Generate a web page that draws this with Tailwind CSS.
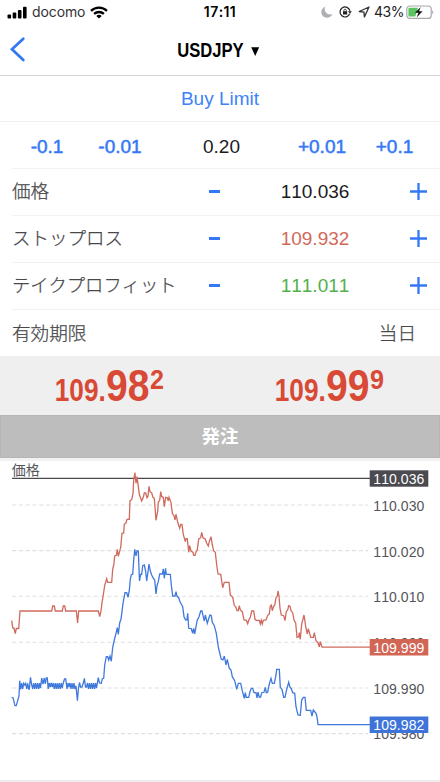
<!DOCTYPE html>
<html lang="ja">
  <head>
    <meta charset="UTF-8" />
    <meta name="viewport" content="width=device-width, initial-scale=1.0" />
    <title>USDJPY</title>
    <script src="https://cdn.jsdelivr.net/npm/@tailwindcss/browser@4"></script>
  </head>

  <body
    class="w-[440px] h-[782px] overflow-hidden bg-white text-[19px] leading-none text-[#1c1c1e] font-['Liberation_Sans','Noto_Sans_CJK_JP',sans-serif] [font-kerning:none]"
  >
    <!-- Status bar -->
    <header class="grid grid-cols-3 items-center h-6 font-[Inter,sans-serif] text-[14px]">
      <div class="flex items-center pl-[7px]">
        <svg class="w-5 h-[13px]" viewBox="0 0 20 13" fill="#000">
          <rect x="0.5" y="8.6" width="3.6" height="4" rx="1" />
          <rect x="5.7" y="6.6" width="3.6" height="6" rx="1" />
          <rect x="10.9" y="3.9" width="3.6" height="8.7" rx="1" />
          <rect x="16" y="0.8" width="3.6" height="11.8" rx="1" />
        </svg>
        <span class="ml-[5px] w-[53px] tracking-[-0.1px] text-[#333]">docomo</span>
        <svg class="ml-[5px] w-[18px] h-[13px]" viewBox="0 0 18 13" fill="none" stroke="#000" stroke-width="2.3">
          <path d="M1 4.8a11.5 11.5 0 0 1 16 0" />
          <path d="M4.1 7.9a7.2 7.2 0 0 1 9.8 0" />
          <path d="M9 12.6 6.3 10a4 4 0 0 1 5.4 0z" fill="#000" stroke="none" />
        </svg>
      </div>
      <div class="text-center font-semibold tracking-[0.4px] text-black">17:11</div>
      <div class="flex items-center justify-end pr-[6px]">
        <svg class="w-3 h-3" viewBox="0 0 12 12" fill="#b0b0b4">
          <path d="M4.4.5C1.9 1.4.3 3.5.3 6.1c0 3.1 2.5 5.6 5.6 5.6 2.5 0 4.6-1.4 5.5-3.7-.8.3-1.5.4-2.2.4C6.100 8.400 3.700 6.200 3.700 3.100c0-.9.2-1.800.7-2.600z" />
        </svg>
        <svg class="ml-[6px] w-[13px] h-3" viewBox="0 0 13 12" fill="none" stroke="#222" stroke-width="1.2">
          <path d="M10.7 7.8A5 5 0 1 1 10.9 4.8" />
          <path d="M9 5.2h3.9L11 7.8z" fill="#222" stroke="none" />
          <rect x="4" y="5.2" width="4.2" height="3.3" fill="#222" stroke="none" />
          <path d="M4.9 5.4V4.4a1.2 1.2 0 0 1 2.4 0v1" stroke-width="0.8" />
        </svg>
        <svg class="ml-[6px] w-3 h-3" viewBox="0 0 12 12" fill="none" stroke="#333" stroke-width="1.3" stroke-linejoin="round">
          <path d="M11 1 1.3 5.5 6 6.1 6.4 10.9z" />
        </svg>
        <span class="ml-[4px] mr-px w-[29px] tracking-[-0.5px] text-[#222]">43%</span>
        <svg class="ml-[2px] w-7 h-[14px]" viewBox="0 0 28 14">
          <rect x="0.8" y="1" width="24.4" height="12.4" rx="3" fill="none" stroke="#a9a9ad" stroke-width="1.2" />
          <path d="M3.6 2.8H12L9.3 11.6H3.6A1.2 1.2 0 0 1 2.4 10.4V4A1.2 1.2 0 0 1 3.6 2.8z" fill="#5ac560" />
          <path d="M14.8 2 8.9 7.8h3.5L10.7 12.5 16.5 6.3H13z" fill="#111" />
          <path d="M26.2 5.3a2.4 2.4 0 0 1 0 4z" fill="#a9a9ad" />
        </svg>
      </div>
    </header>

    <!-- Title bar -->
    <nav class="h-[52px] border-b border-[#d4d4d6]">
      <svg class="w-[440px] h-[51px]" viewBox="0 24 440 51">
        <path d="M23.3 38.7 12 49.3 23.3 60" fill="none" stroke="#3478f6" stroke-width="2.8" stroke-linecap="round" stroke-linejoin="miter" />
        <text x="177.2" y="57.2" font-size="20.8" font-weight="700" textLength="66.5" lengthAdjust="spacingAndGlyphs" fill="#000">USDJPY</text>
        <path d="M251.2 47.3h8L255.2 56z" fill="#000" />
      </svg>
    </nav>

    <!-- Order form -->
    <main>
      <div class="h-[46px] flex items-center justify-center border-b border-[#f2f2f2] text-[#3f82f7]">
        <span class="w-[80px] text-center whitespace-nowrap">Buy Limit</span>
      </div>
      <div class="h-[46px] ml-3 flex items-center text-[#3478f6] pt-[2px]">
        <button class="w-[70px] [-webkit-text-stroke:0.5px]">-0.1</button>
        <button class="w-[76px] [-webkit-text-stroke:0.5px]">-0.01</button>
        <span class="w-[127px] text-center text-[#1c1c1e]">0.20</span>
        <button class="w-[74px] [-webkit-text-stroke:0.5px]">+0.01</button>
        <button class="w-[71px] [-webkit-text-stroke:0.5px]">+0.1</button>
      </div>

      <div class="h-[47px] ml-3 pb-px flex items-center border-t border-[#f2f2f2]">
        <span class="w-[197px] pt-px text-[18.5px] font-light text-[#48484a] [-webkit-text-stroke:0.25px]">価格</span>
        <span class="w-[11px] h-[3px] bg-[#3478f6]"></span>
        <span class="w-[190px] text-center">110.036</span>
        <svg class="w-[17px] h-[17px]" viewBox="0 0 17 17" stroke="#3478f6" stroke-width="2.3">
          <path d="M8.5 0v17M0 8.5h17" />
        </svg>
      </div>
      <div class="h-[47px] ml-3 pb-px flex items-center border-t border-[#f2f2f2]">
        <span class="w-[197px] pt-px text-[18.5px] font-light text-[#48484a] [-webkit-text-stroke:0.25px]">ストップロス</span>
        <span class="w-[11px] h-[3px] bg-[#3478f6]"></span>
        <span class="w-[190px] text-center text-[#d2695a]">109.932</span>
        <svg class="w-[17px] h-[17px]" viewBox="0 0 17 17" stroke="#3478f6" stroke-width="2.3">
          <path d="M8.5 0v17M0 8.5h17" />
        </svg>
      </div>
      <div class="h-[47px] ml-3 pb-px flex items-center border-t border-[#f2f2f2]">
        <span class="w-[197px] pt-px text-[18.3px] font-light text-[#48484a] [-webkit-text-stroke:0.25px]">テイクプロフィット</span>
        <span class="w-[11px] h-[3px] bg-[#3478f6]"></span>
        <span class="w-[190px] text-center text-[#52b04c]">111.011</span>
        <svg class="w-[17px] h-[17px]" viewBox="0 0 17 17" stroke="#3478f6" stroke-width="2.3">
          <path d="M8.5 0v17M0 8.5h17" />
        </svg>
      </div>
      <div class="h-[47px] ml-3 pr-6 pt-0.5 flex items-center justify-between border-t border-[#f2f2f2] text-[18.6px] font-light text-[#48484a] [-webkit-text-stroke:0.25px]">
        <span>有効期限</span>
        <span>当日</span>
      </div>

      <!-- Bid / ask -->
      <svg class="block w-[440px] h-[59px] bg-[#efefef]" viewBox="0 356 440 59" font-weight="700" fill="#d84a36">
        <text x="54.8" y="401" font-size="30.5" textLength="51" lengthAdjust="spacingAndGlyphs">109.</text>
        <text x="106" y="401" font-size="44" textLength="43.5" lengthAdjust="spacingAndGlyphs">98</text>
        <text x="150" y="388.5" font-size="27.5" textLength="14" lengthAdjust="spacingAndGlyphs">2</text>
        <text x="274.8" y="401" font-size="30.5" textLength="51" lengthAdjust="spacingAndGlyphs">109.</text>
        <text x="326" y="401" font-size="44" textLength="43.5" lengthAdjust="spacingAndGlyphs">99</text>
        <text x="370" y="388.5" font-size="27.5" textLength="14" lengthAdjust="spacingAndGlyphs">9</text>
      </svg>
      <button class="block w-full h-[43px] pt-0.5 bg-[#bdbdbd] border border-[#b5b5b5] text-[18.5px] font-bold text-white">発注</button>
      <div class="h-[3px] bg-[#f2f2f2]"></div>
    </main>

    <!-- Tick chart -->
    <svg class="block w-[440px] h-[319px]" viewBox="0 461 440 319" font-size="14" fill="#55555a">
      <g stroke="#e0e0e0" stroke-width="1.1" stroke-dasharray="4.2 2.6">
        <path d="M12 505H368M12 550.6H368M12 596.3H368M12 642.2H368M12 688H368M12 733.6H368" />
      </g>
      <text x="11.8" y="475" font-size="14">価格</text>
      <g>
        <text x="373.3" y="511" textLength="51">110.030</text>
        <text x="373.3" y="556.5" textLength="51">110.020</text>
        <text x="373.3" y="602.2" textLength="51">110.010</text>
        <text x="373.3" y="648" textLength="51">110.000</text>
        <text x="373.3" y="693.8" textLength="51">109.990</text>
        <text x="373.3" y="739.3" textLength="51">109.980</text>
      </g>
      <path d="M12 478.3H370" stroke="#4a4a4e" stroke-width="1.3" />
      <polyline
        fill="none"
        stroke="#cf6b5e"
        stroke-width="1.3"
        points="11.7,620.7 12.7,627.7 14,628.3 15.3,633.5 16.3,628.5 18.7,628.5 20,611 51.7,611 52.7,606 54.3,606 55.3,611 62.3,611 63.3,606 64.7,606 65.7,611 76.3,611 77.6,623 78.7,611 98.3,611 99.7,616.5 101,611 102,602.7 103.3,595 104.7,585.3 106.7,578.7 107.7,582.3 111.7,582.3 112.7,569.3 114,563.3 114.7,556 116.3,555.3 117.3,549.3 118.3,556.3 120.7,547.3 122,533.3 123.7,533 124.3,524.3 126,523 127,519.3 129.3,519.3 130,500.7 131.7,499.7 133,493.3 133.7,480 134.9,472.500 136,483.3 137,476.7 138.3,486.7 139.3,494.3 141.7,501 143.3,497.3 144.3,493 145.7,493 147,497.7 148,496.3 149,486.3 150,491.7 151.7,493 153,497.3 154.3,498.3 156,520.3 157.7,511 158.3,502.3 159.7,500.3 160.7,491.7 161.7,496.7 163.3,497.3 164.3,506.7 165.7,497.3 167.3,497.7 168.3,501 169,497.3 171,502.3 172.3,513.3 174,515.7 175,520 176,514.3 177.7,522.3 179.7,528.3 180.7,524.3 182,524.3 183.3,534.3 185.3,541.7 186,538.7 187.3,538.7 188.7,552.3 189.7,545.7 191,551 193,552.5 193.7,555.3 195,555.3 196,551.7 197.3,549.7 198.7,539 200.7,537.7 201.7,532.3 203,537.7 205.3,539 206.7,543.3 208.3,546 209.3,541.7 211,536.7 212.3,545 213.7,551 215.3,552.3 216.7,565 218,574 220.7,574.3 222.7,587.7 224.3,582.3 229,582.3 230.3,595 232.7,597.3 234.3,605.3 236,607.3 237,610.7 238.3,610.7 239.3,605.7 240.3,610 242.3,611.7 244,620 246.3,620.3 247.7,623.7 248.7,620.3 250.3,617.3 251.7,611 253.7,611 255,619.3 256.3,620.3 259.3,620.3 260.3,624 261.3,620.3 262.3,624 263.3,620.3 266,620 267.7,615.3 269.3,614 270.3,606 271.3,605 272.3,610.7 273.7,606 274.7,605.3 276,597.7 277.3,596 278,591 279,596 280,608.3 281.3,615 283.7,615.7 285,620.7 286.3,611.7 287.7,610 288.7,605.7 290,606.3 291,610.7 292.7,612.7 294,620 295.7,623.3 297,637.3 298.7,636.7 299.3,632.7 300.3,639.3 301.7,624 304,615 306,628.3 307.3,634 308.3,628.7 310.7,637.3 313.3,637.3 314.3,632.7 316,640.7 318,642.7 319.3,647 320.3,641.7 322,647.2 370,647.2"
      />
      <polyline
        fill="none"
        stroke="#4079dc"
        stroke-width="1.3"
        points="11.7,697.3 13,697.7 15,705.7 16.3,705.7 19,696 19.7,680.7 20.7,689.3 21.7,683 22.7,689 23.7,683.3 24.7,685 25.7,683.3 26.7,689 27.7,683.3 28.7,689 29.3,689 30.5,677.3 31.5,684 32.7,689 33.7,683 34.7,689 35.7,683 36.7,689 37.7,683 38.7,689 39.7,683 40.5,688 41.7,678 43,684 44.3,678 45.3,684 46.3,678 47.3,678 48.2,689 49.2,683 50.2,687 51.2,683 52.2,687 53.2,683 54.2,689 55.2,683 56.2,689 57.2,683 58.2,689 59.2,683 60.2,689 61.2,683 62.2,688 63,684 64.5,679 65.7,679 67,689 68,683 69,687 70,683 71,689 72,683 73,689 74,683 75,689 76,686 77.4,700.7 78.5,688 79.5,682.5 80.5,687 82,687 83.3,683 84.4,678.3 85.5,687 86.5,687 87.5,683 88.5,689 89.5,683 90.5,689 91.5,683 92.5,689 93.5,683 94.5,689 95.5,683 96.5,688 98.3,677.7 99.5,683 101.3,683.3 102.3,678.7 103.7,678.3 104.7,665 106.3,656.7 107.7,656.7 108.7,660 110,656 111.3,661.3 112.7,647.3 114.3,640 116,633.3 117.3,627.7 118.3,634.3 119.7,622.7 121,619.3 123,603.3 125,592.7 126.7,592.7 128,597.3 129.3,590.7 130.3,579.3 131.3,574.7 132.7,574.3 133.7,560 134.7,549.3 136,556 137,550.7 138.3,551 139.5,581 140.7,574.3 141.7,574.3 142.7,565.7 144.3,565 145.7,571.7 146.7,581 148,571.7 149,564 150.3,571 151.7,575 153,577.7 154.7,580 156,594 157,585.7 158.3,581.7 159.7,574 162.3,574 163.3,569 164.3,578.3 165.5,568.3 166.3,574.3 170.3,574.3 171.3,585 172.7,596 175,596 176,591.7 177,596.3 178.7,597.7 180,601.7 182.7,606.7 184,616.7 185.7,620 187,619.7 187.7,613.3 188.7,628.3 191.3,628.7 192.7,633.3 193.7,628.3 194.7,634 196,626.7 197.3,620 199,616.7 200.7,611 202,611 203,615.7 204.3,621 205.3,615 207.3,623.3 209,617.7 210,615 211.3,615.7 212.3,622.3 214.3,625.7 216.3,633.3 218.5,648 221.3,659.3 223,660 224.3,656 226,665 227.3,659.3 229.3,668.3 231,670 232.3,676.7 234.7,680.7 236.7,689.3 238.3,683.3 240.7,683.3 242.3,690.7 244.3,698.3 245.3,692.7 246.3,697.3 248.7,697.3 250,691.7 251.3,688.3 252.7,688.3 254,692.7 256,692.7 257,698 258,692 259.3,697.3 260.7,697 261.7,692.7 264,692.3 265.3,687.3 266.3,692.7 267.7,692 269.3,684 271,678.3 272.3,683.3 274.3,683.3 275.7,676.7 276.7,669.3 279.3,669.3 280.3,687.3 282,689.3 283.7,697.3 285,697.3 286.7,689.3 288.7,682.3 290,687.3 291.3,688.7 292.7,692.7 294.7,693.3 296,706.7 298,715 300.3,715.3 301.7,700 303.3,697.3 305,697.3 306.3,710.3 310.7,710.3 312,716 313.3,710 316,713.3 317,716.7 318,724.6 370,724.6"
      />
      <g fill="#fff">
        <rect x="369.7" y="470.3" width="58.6" height="16.4" fill="#4a4a50" />
        <text x="373.3" y="483.7" textLength="51">110.036</text>
        <rect x="369.7" y="639" width="58.6" height="16.5" fill="#d16654" />
        <text x="373.3" y="652.5" textLength="51">109.999</text>
        <rect x="369.7" y="716.5" width="58.6" height="16.5" fill="#3e74d9" />
        <text x="373.3" y="730" textLength="51">109.982</text>
      </g>
    </svg>
    <div class="h-[2px] bg-[#ececec]"></div>
  </body>
</html>
